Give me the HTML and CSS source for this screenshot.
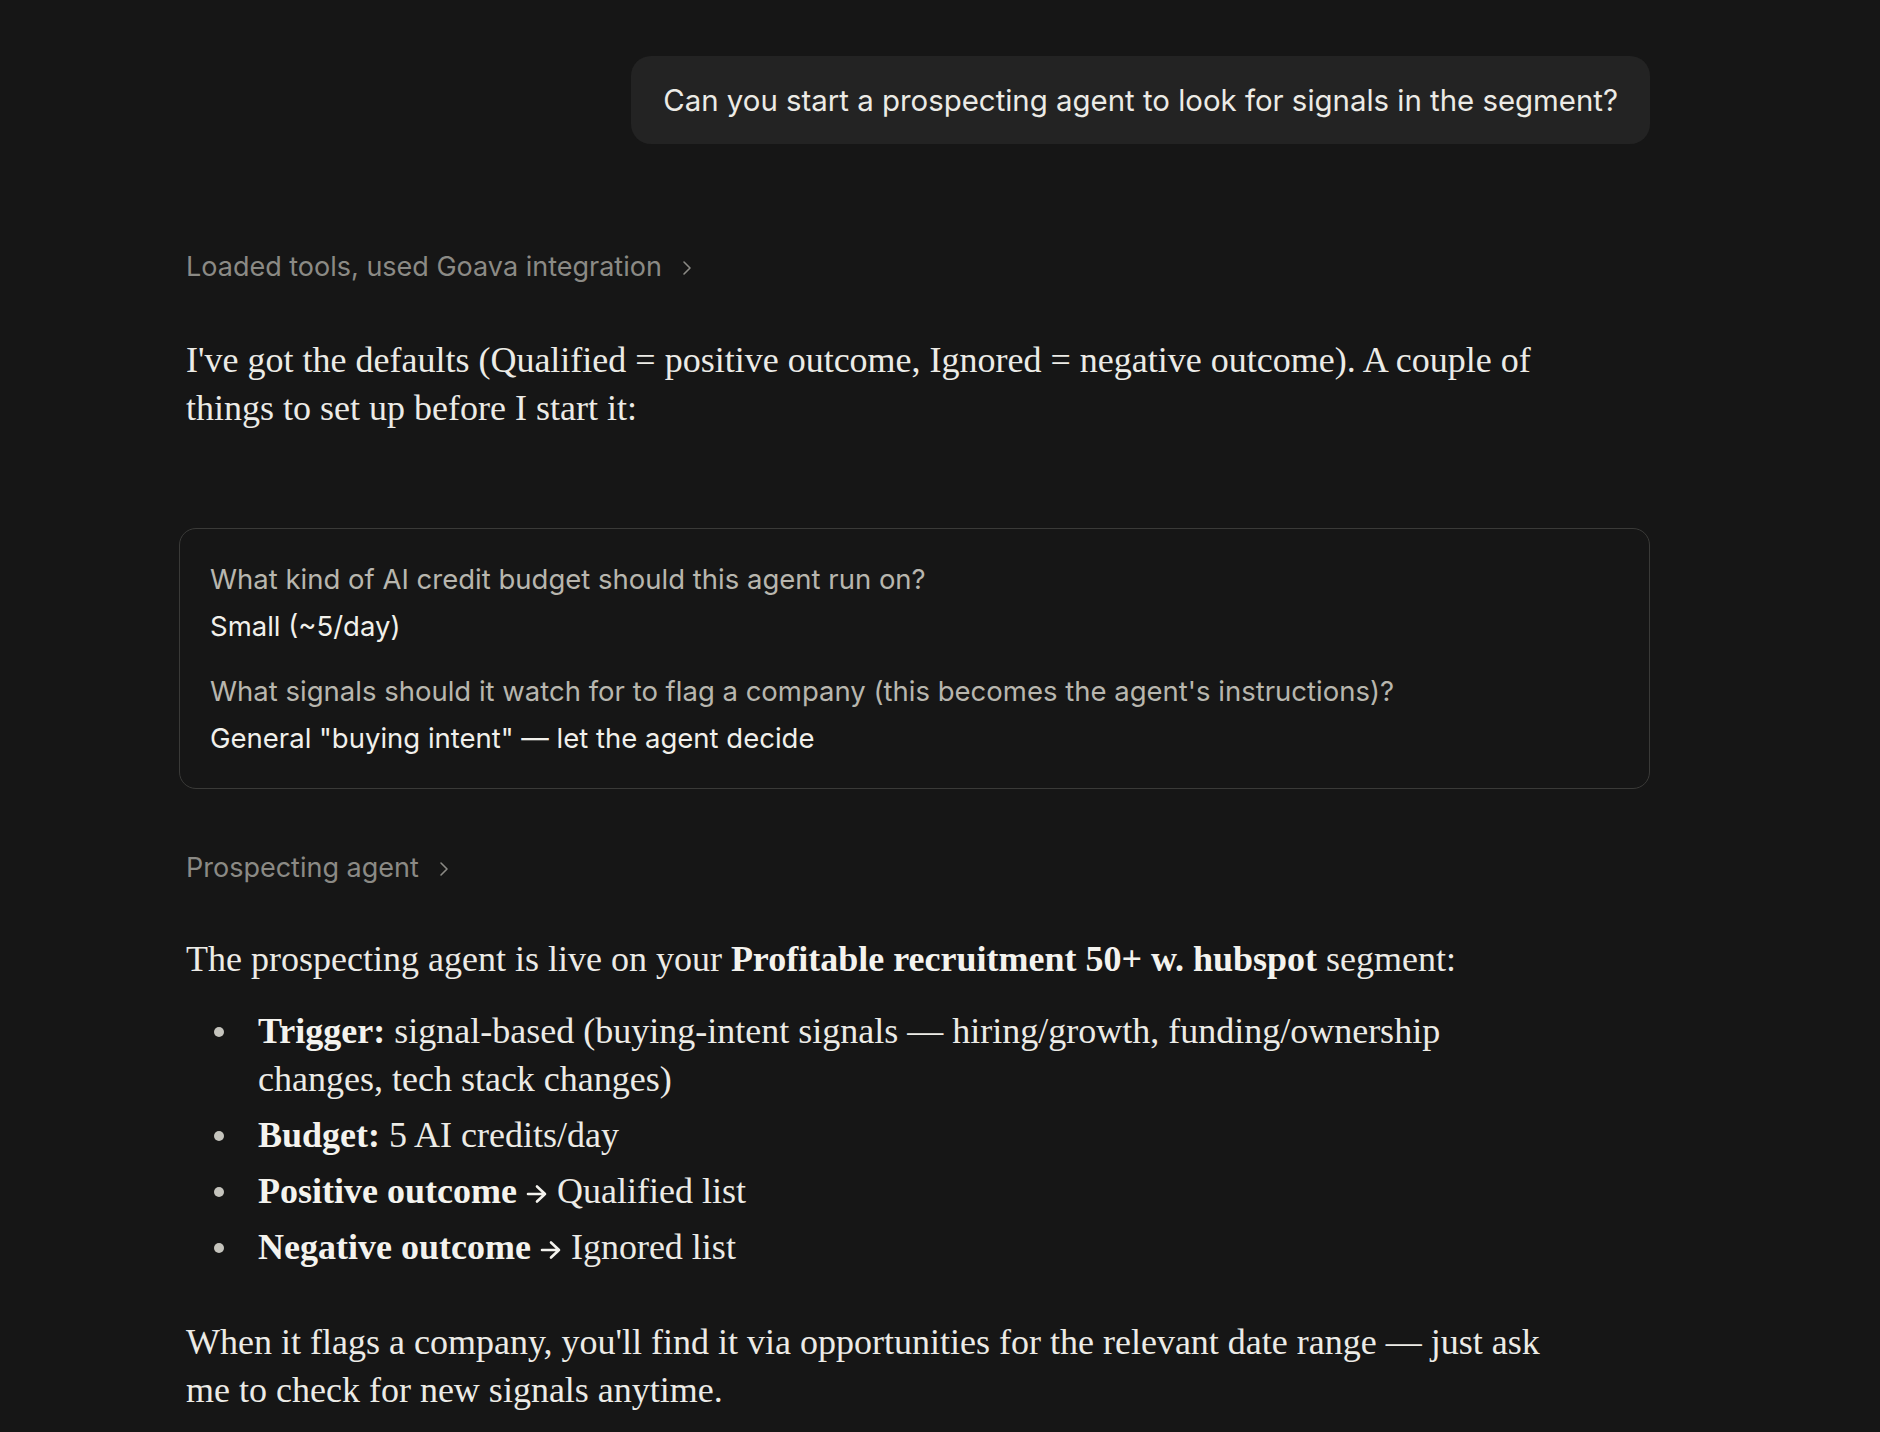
FILE: index.html
```html
<!DOCTYPE html>
<html>
<head>
<meta charset="utf-8">
<link rel="stylesheet" href="styles.css">
</head>
<body>
<main class="chat">
  <div class="user-row">
    <div class="bubble">Can you start a prospecting agent to look for signals in the segment?</div>
  </div>

  <div class="tool-line tool-first">
    <span>Loaded tools, used Goava integration</span>
    <svg class="chev" viewBox="0 0 10 16"><path d="M2 2 L8 8 L2 14" fill="none" stroke="currentColor" stroke-width="1.6" stroke-linecap="round" stroke-linejoin="round"/></svg>
  </div>

  <p class="prose p-first">I've got the defaults (Qualified = positive outcome, Ignored = negative outcome). A couple of things to set up before I start it:</p>

  <div class="card">
    <div class="q">What kind of AI credit budget should this agent run on?</div>
    <div class="a">Small (~5/day)</div>
    <div class="q q2">What signals should it watch for to flag a company (this becomes the agent's instructions)?</div>
    <div class="a">General "buying intent" — let the agent decide</div>
  </div>

  <div class="tool-line tool-second">
    <span>Prospecting agent</span>
    <svg class="chev" viewBox="0 0 10 16"><path d="M2 2 L8 8 L2 14" fill="none" stroke="currentColor" stroke-width="1.6" stroke-linecap="round" stroke-linejoin="round"/></svg>
  </div>

  <p class="prose p-second">The prospecting agent is live on your <strong>Profitable recruitment 50+ w. hubspot</strong> segment:</p>

  <ul class="list">
    <li><strong>Trigger:</strong> signal-based (buying-intent signals — hiring/growth, funding/ownership changes, tech stack changes)</li>
    <li><strong>Budget:</strong> 5 AI credits/day</li>
    <li><strong>Positive outcome <svg class="arrow" viewBox="0 0 22 20"><path d="M2 10 H19 M11 2.5 L19 10 L11 17.5" fill="none" stroke="currentColor" stroke-width="2.6" stroke-linecap="round" stroke-linejoin="round"/></svg></strong> Qualified list</li>
    <li><strong>Negative outcome <svg class="arrow" viewBox="0 0 22 20"><path d="M2 10 H19 M11 2.5 L19 10 L11 17.5" fill="none" stroke="currentColor" stroke-width="2.6" stroke-linecap="round" stroke-linejoin="round"/></svg></strong> Ignored list</li>
  </ul>

  <p class="prose p-last">When it flags a company, you'll find it via opportunities for the relevant date range — just ask me to check for new signals anytime.</p>
</main>
</body>
</html>
```

FILE: styles.css
```css
html, body {
  margin: 0;
  padding: 0;
  background: #161616;
}

.chat {
  width: 1471px;
  margin-left: 179px;
  display: flex;
  flex-direction: column;
  font-family: "Inter", "Liberation Sans", sans-serif;
  color: #ecebe6;
}

.user-row {
  display: flex;
  justify-content: flex-end;
  margin-top: 56px;
}

.bubble {
  background: #232323;
  border-radius: 20px;
  height: 88px;
  box-sizing: border-box;
  padding: 0 32px;
  display: flex;
  align-items: center;
  font-size: 29.4px;
  color: #ecebe6;
}

.tool-line {
  display: flex;
  align-items: center;
  gap: 20px;
  margin-left: 7px;
  font-size: 27px;
  line-height: 36px;
  color: #8b8a85;
}

.chev {
  width: 10px;
  height: 16px;
  margin-top: 2px;
}

.tool-first { margin-top: 105px; }
.tool-second { margin-top: 61px; }

.prose {
  font-family: "Liberation Serif", serif;
  font-size: 36px;
  line-height: 48px;
  margin: 0 0 0 7px;
  width: 1400px;
  color: #ecebe6;
}

.prose strong { font-weight: 700; color: #f4f3ee; }

.p-first { margin-top: 51px; }
.p-second { margin-top: 49px; }
.p-last { margin-top: 47px; width: 1385px; }

.card {
  margin-top: 96px;
  border: 1px solid #3a3a38;
  border-radius: 17px;
  padding: 30px 30px 30px 30px;
}

.q {
  font-size: 27.5px;
  line-height: 40px;
  color: #b8b6ae;
}

.a {
  font-size: 27.5px;
  line-height: 40px;
  margin-top: 7px;
  color: #f1f0eb;
}

.q2 { margin-top: 25px; }

.list {
  font-family: "Liberation Serif", serif;
  font-size: 36px;
  line-height: 48px;
  margin: 24px 0 0 7px;
  padding: 0 0 0 72px;
  width: 1250px;
  list-style: none;
  display: flex;
  flex-direction: column;
  gap: 8px;
}

.list li {
  position: relative;
}

.list li::before {
  content: "";
  position: absolute;
  left: -44px;
  top: 20px;
  width: 10px;
  height: 10px;
  border-radius: 50%;
  background: #c5c4bd;
}

.list strong { font-weight: 700; color: #f4f3ee; }

.arrow {
  width: 22px;
  height: 20px;
  vertical-align: -1px;
}
```
